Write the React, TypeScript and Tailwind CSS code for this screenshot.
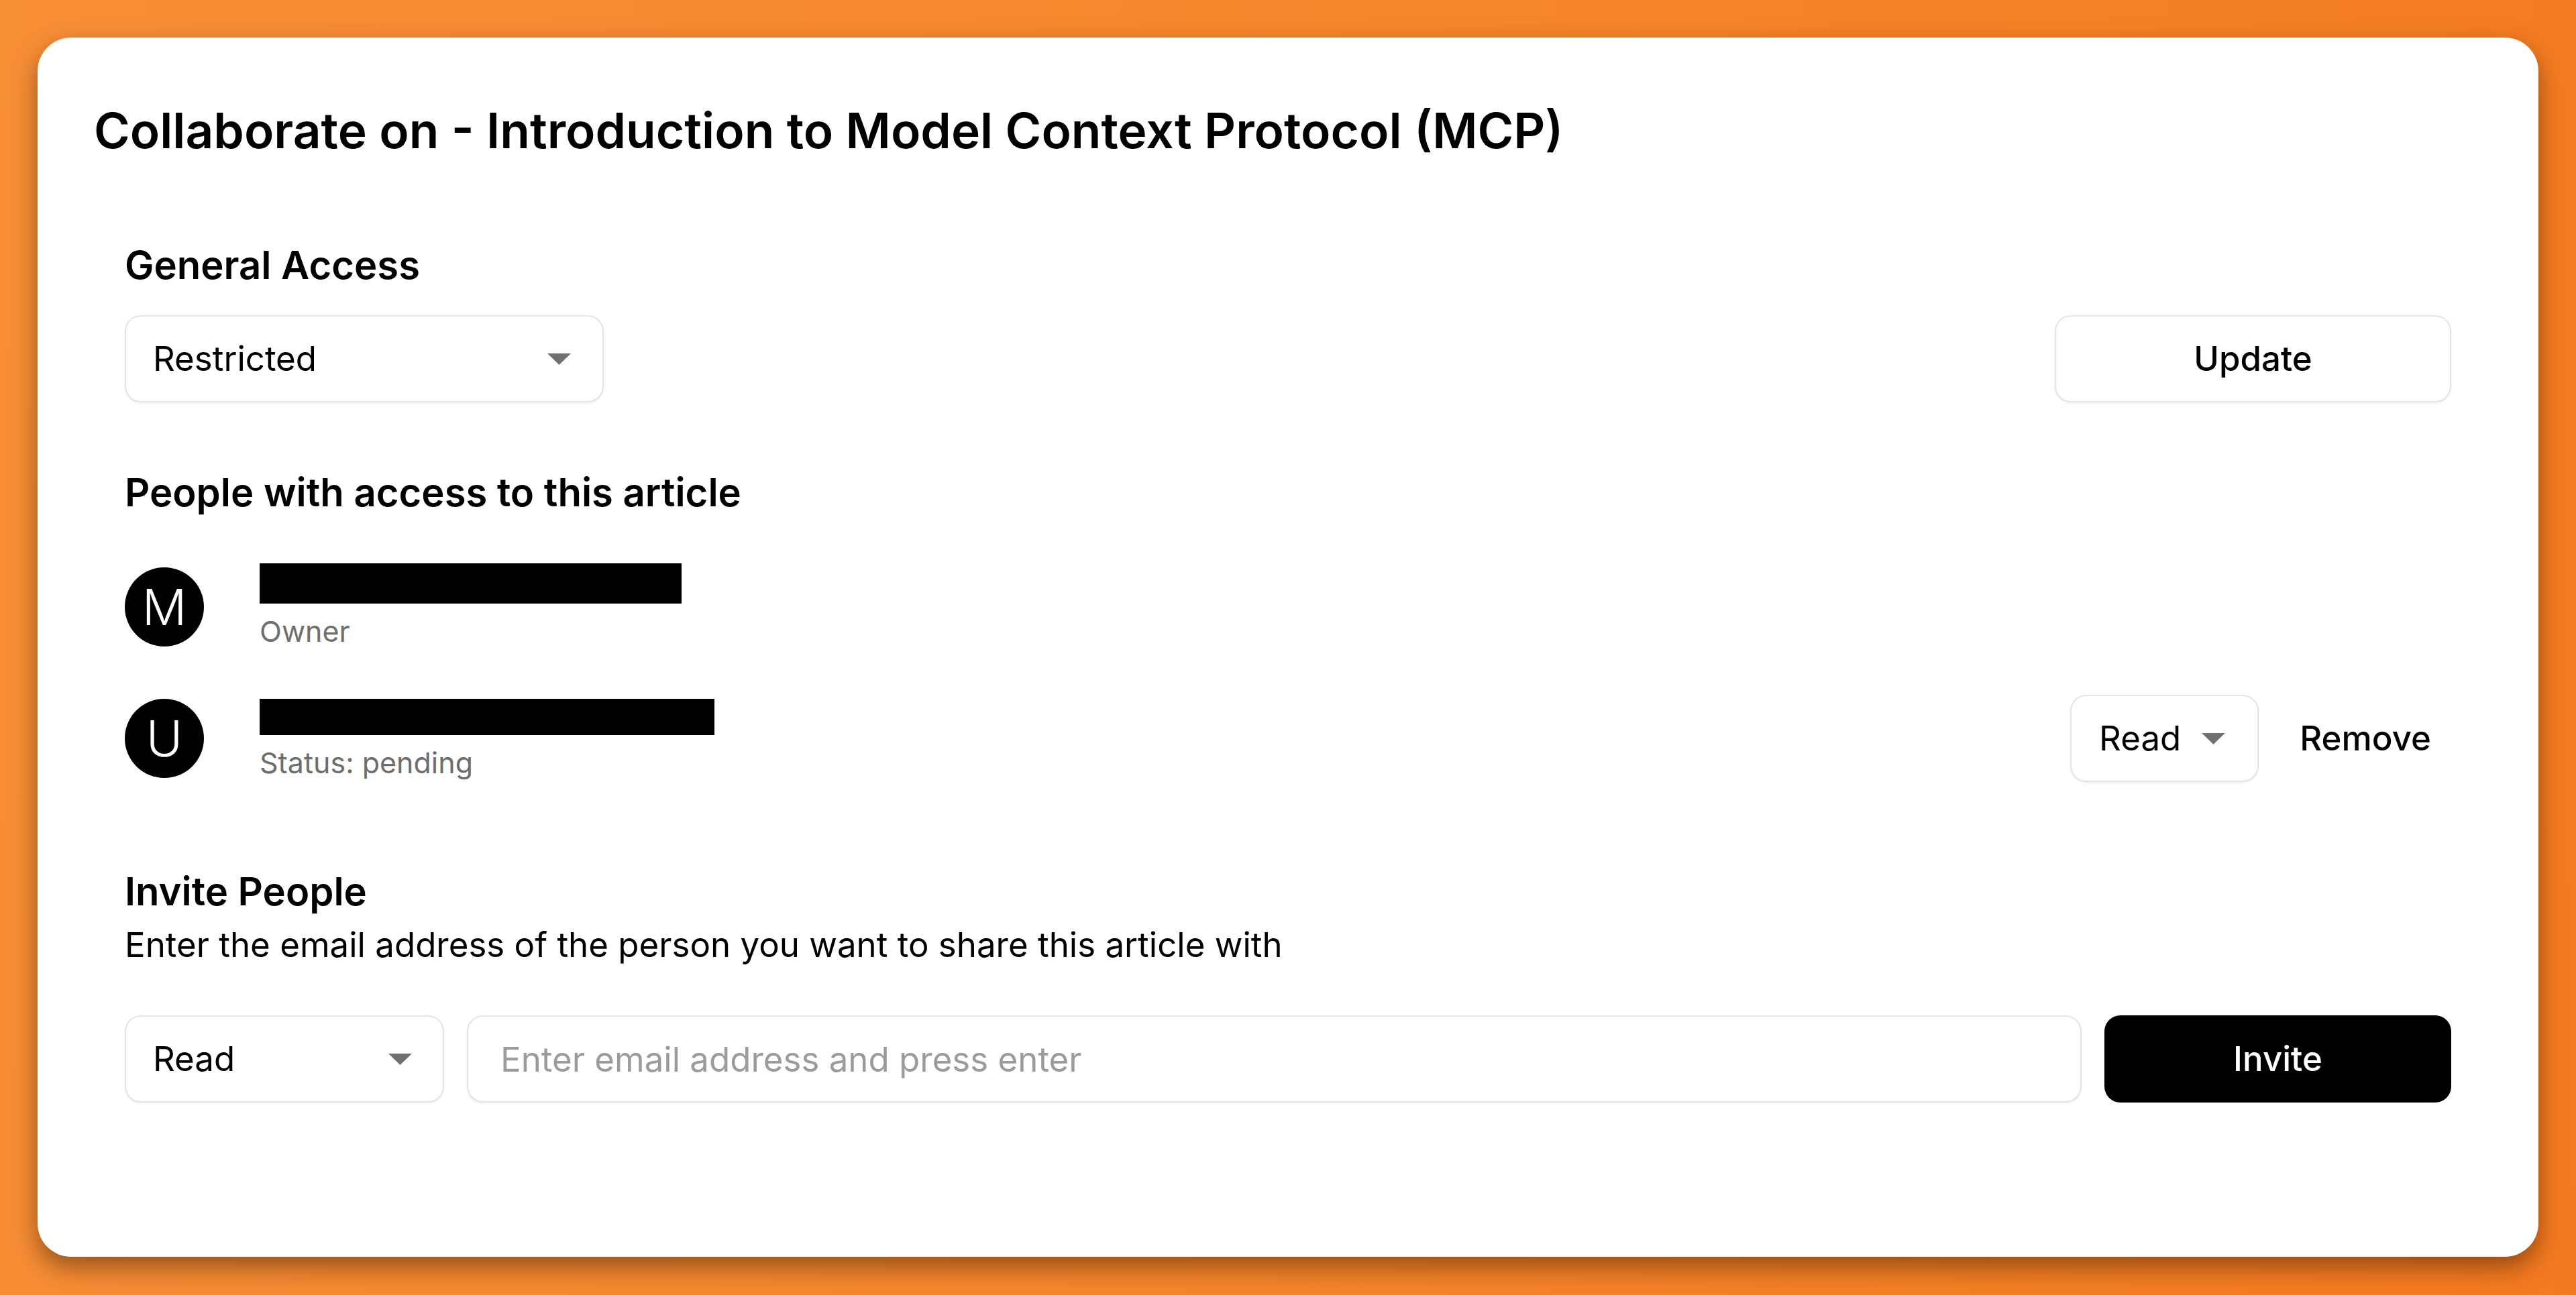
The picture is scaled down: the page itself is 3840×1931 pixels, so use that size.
import React from 'react';

function Caret() {
  return (
    <svg width="35" height="17" viewBox="0 0 35 17" className="shrink-0">
      <polygon points="0,0 35,0 17.5,17" fill="#707070" />
    </svg>
  );
}

function SelectBox({ label, className }: { label: string; className: string }) {
  return (
    <div
      className={
        'flex items-center h-[130px] border-2 border-[#e4e4e4] rounded-[24px] bg-white shadow-[0_2px_3px_rgba(0,0,0,0.06)] ' +
        className
      }
    >
      <span className="text-[51px] leading-[60px] text-black">{label}</span>
      <Caret />
    </div>
  );
}

function Person({ letter, barW, barH, barMt, sub }: { letter: string; barW: string; barH: string; barMt: string; sub: string }) {
  return (
    <div className="flex items-center gap-[83px]">
      <div className="w-[118px] h-[118px] rounded-full bg-black text-white flex items-center justify-center text-[74px] font-light leading-none">
        {letter}
      </div>
      <div className="flex flex-col">
        <div className={'bg-black ' + barW + ' ' + barH + ' ' + barMt} />
        <p className="mt-[13px] text-[43px] leading-[56px] text-[#6e6e6e]">{sub}</p>
      </div>
    </div>
  );
}

export default function App() {
  return (
    <div className="min-h-screen flex px-[56px] pt-[56px] pb-[57px] bg-[linear-gradient(100deg,#f78f37_0%,#f6862c_50%,#f47a20_100%)] font-['Inter',sans-serif]">
      <div className="flex-1 bg-white rounded-[50px] shadow-[0_16px_36px_rgba(60,25,0,0.5)] pt-[95px] px-[84px]">
        <h1 className="text-[73px] leading-[88px] font-semibold text-black">
          Collaborate on - Introduction to Model Context Protocol (MCP)
        </h1>

        <div className="px-[46px] mt-[117px]">
          <h2 className="text-[58px] leading-[78px] font-semibold text-black">General Access</h2>
          <div className="mt-[36px] flex items-center justify-between">
            <SelectBox label="Restricted" className="w-[714px] justify-between pl-[40px] pr-[47px]" />
            <button className="w-[591px] h-[130px] border-2 border-[#e4e4e4] rounded-[24px] bg-white shadow-[0_2px_3px_rgba(0,0,0,0.06)] text-[51px] font-medium text-black">
              Update
            </button>
          </div>

          <h2 className="mt-[95px] text-[58px] leading-[78px] font-semibold text-black">
            People with access to this article
          </h2>
          <div className="mt-[67px] flex flex-col gap-[67px]">
            <Person letter="M" barW="w-[629px]" barH="h-[60px]" barMt="mt-0" sub="Owner" />
            <div className="flex items-center justify-between">
              <Person letter="U" barW="w-[678px]" barH="h-[54px]" barMt="mt-[5px]" sub="Status: pending" />
              <div className="flex items-center gap-[31px]">
                <SelectBox label="Read" className="gap-[31px] pl-[41px] pr-[48px]" />
                <button className="px-[30px] h-[130px] text-[51px] font-medium text-black">Remove</button>
              </div>
            </div>
          </div>

          <h2 className="mt-[124px] text-[58px] leading-[78px] font-semibold text-black">Invite People</h2>
          <p className="mt-[7px] text-[51px] leading-[68px] text-black">
            Enter the email address of the person you want to share this article with
          </p>
          <div className="mt-[71px] flex items-center gap-[34px]">
            <SelectBox label="Read" className="w-[476px] justify-between pl-[40px] pr-[46px]" />
            <input
              placeholder="Enter email address and press enter"
              className="flex-1 min-w-0 h-[130px] border-2 border-[#e4e4e4] rounded-[24px] shadow-[0_2px_3px_rgba(0,0,0,0.06)] pl-[48px] text-[51px] text-black placeholder:text-[#9b9b9b] outline-none"
            />
            <button className="w-[517px] h-[130px] rounded-[24px] bg-black text-white text-[51px] font-medium">
              Invite
            </button>
          </div>
        </div>
      </div>
    </div>
  );
}
